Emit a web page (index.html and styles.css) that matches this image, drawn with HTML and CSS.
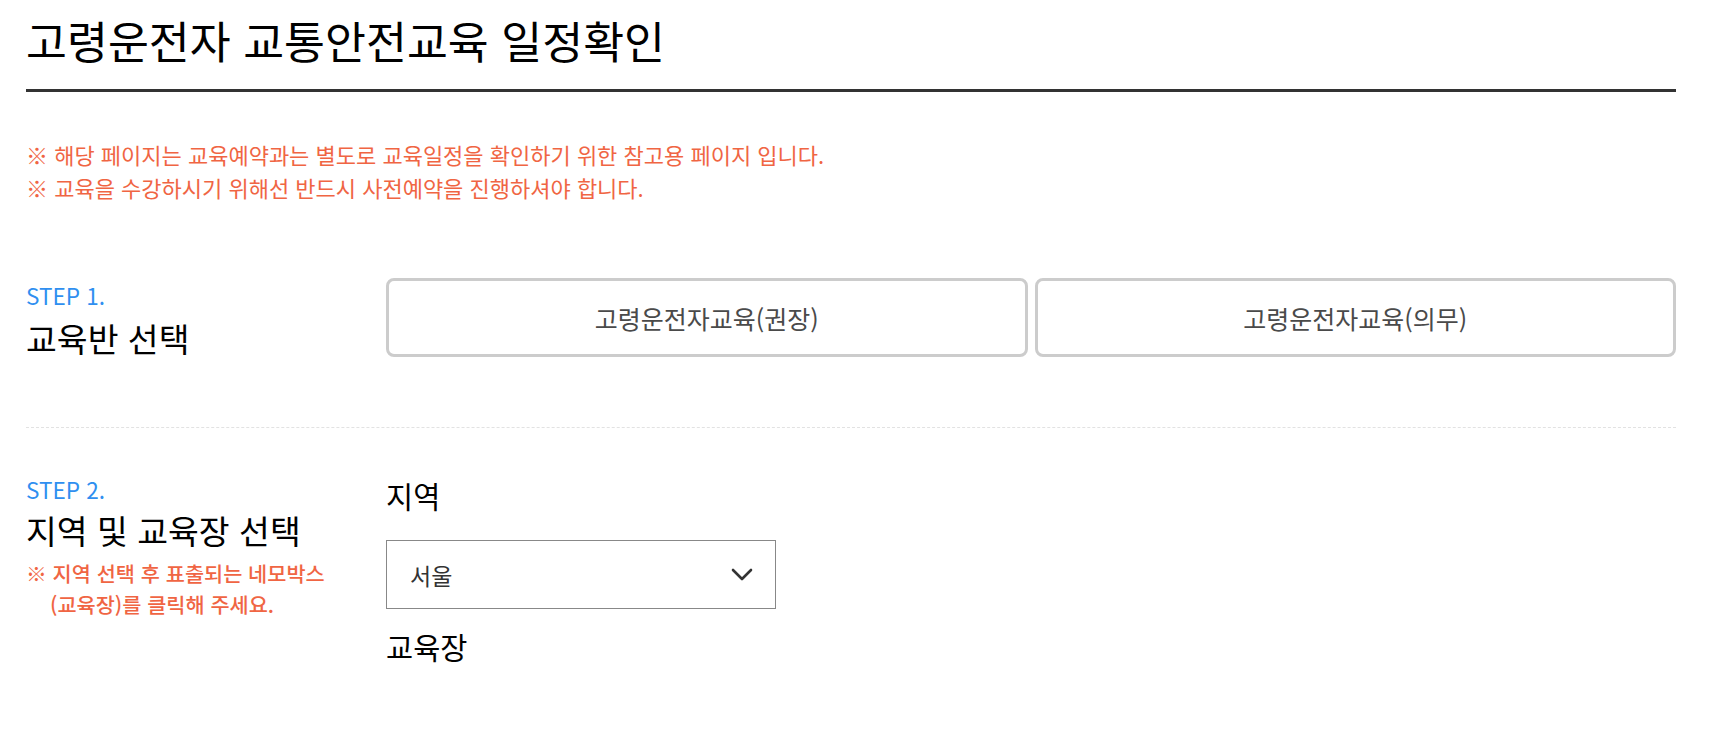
FILE: index.html
```html
<!DOCTYPE html>
<html lang="ko">
<head>
<meta charset="utf-8">
<title>고령운전자 교통안전교육 일정확인</title>
<link rel="stylesheet" href="styles.css">
</head>
<body>
<div class="page">
  <h1 class="title">고령운전자 교통안전교육 일정확인</h1>
  <div class="notice">
    <p>※ 해당 페이지는 교육예약과는 별도로 교육일정을 확인하기 위한 참고용 페이지 입니다.</p>
    <p>※ 교육을 수강하시기 위해선 반드시 사전예약을 진행하셔야 합니다.</p>
  </div>

  <section class="step step1">
    <div class="step-head">
      <div class="step-label">STEP 1.</div>
      <div class="step-title">교육반 선택</div>
    </div>
    <div class="step-body choices">
      <button class="choice">고령운전자교육(권장)</button>
      <button class="choice">고령운전자교육(의무)</button>
    </div>
  </section>

  <section class="step step2">
    <div class="step-head">
      <div class="step-label">STEP 2.</div>
      <div class="step-title">지역 및 교육장 선택</div>
      <div class="step-note">
        <p>※ 지역 선택 후 표출되는 네모박스</p>
        <p class="indent">(교육장)를 클릭해 주세요.</p>
      </div>
    </div>
    <div class="step-body fields">
      <div class="field-label">지역</div>
      <div class="select">
        <span class="select-value">서울</span>
        <svg class="chevron" width="22" height="13" viewBox="0 0 22 13"><polyline points="2,2 11,11 20,2" fill="none" stroke="#333" stroke-width="2.6" stroke-linecap="round" stroke-linejoin="round"/></svg>
      </div>
      <div class="field-label center-label">교육장</div>
    </div>
  </section>
</div>
</body>
</html>
```
FILE: styles.css
```css
html, body {
  margin: 0;
  padding: 0;
  background: #fff;
}
body {
  font-family: "Noto Sans CJK KR", "Noto Sans", sans-serif;
  color: #111;
}
p { margin: 0; }
.page {
  width: 1650px;
  padding-left: 26px;
}
.title {
  margin: 0;
  padding: 16px 0 25px;
  font-size: 44.5px;
  line-height: 48px;
  font-weight: 400;
  color: #000;
  border-bottom: 3px solid #333;
}
.notice {
  margin-top: 46px;
  font-size: 22px;
  line-height: 33px;
  color: #f06543;
}
.step {
  display: flex;
}
.step1 {
  margin-top: 74px;
  padding-bottom: 67px;
  border-bottom: 1px dashed #e2e2e2;
}
.step2 {
  padding-top: 46px;
}
.step-head {
  width: 360px;
  flex-shrink: 0;
}
.step1 .step-head { padding-top: 2px; }
.step-label {
  font-size: 22.5px;
  line-height: 30px;
  color: #2f8ff0;
}
.step-title {
  margin-top: 6px;
  font-size: 33.5px;
  line-height: 44px;
  color: #000;
}
.step2 .step-title { margin-top: 4px; }
.step-note {
  margin-top: 6px;
  font-size: 20.8px;
  line-height: 31px;
  font-weight: 500;
  color: #f06543;
}
.step-note .indent { padding-left: 24px; }
.choices {
  flex: 1;
  display: flex;
  gap: 7px;
}
.choice {
  flex: 1;
  height: 79px;
  background: #fff;
  border: 3px solid #cccccc;
  border-radius: 8px;
  font-family: "Noto Sans CJK KR", "Noto Sans", sans-serif;
  font-size: 25px;
  color: #4a4a4a;
  padding: 0;
}
.fields {
  padding-top: 3px;
}
.field-label {
  font-size: 29.5px;
  line-height: 36px;
  color: #000;
}
.select {
  margin-top: 27px;
  width: 390px;
  height: 69px;
  box-sizing: border-box;
  border: 1px solid #888;
  display: flex;
  align-items: center;
  justify-content: space-between;
  padding: 0 22px 0 23px;
}
.select-value {
  font-size: 23px;
  color: #333;
}
.center-label {
  margin-top: 19px;
}
```
